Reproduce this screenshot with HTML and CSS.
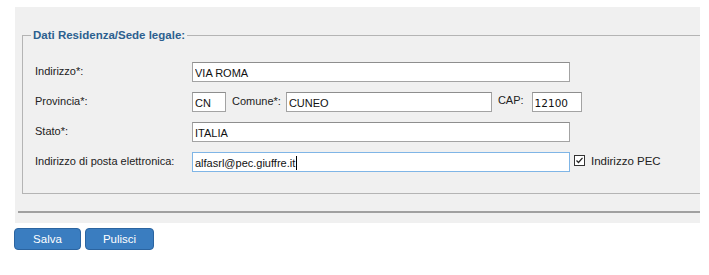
FILE: index.html
```html
<!DOCTYPE html>
<html lang="it">
<head>
  <meta charset="UTF-8">
  <title>Dati Residenza</title>
  <link rel="stylesheet" href="styles.css">
</head>
<body>

  <div class="panel">
    <fieldset class="box">
      <legend>Dati Residenza/Sede legale:</legend>

      <div class="row">
        <label class="lbl">Indirizzo*:</label>
        <input type="text" class="fld long" value="VIA ROMA">
      </div>

      <div class="row">
        <label class="lbl">Provincia*:</label>
        <input type="text" class="fld prov" value="CN">
        <span class="inline-lbl">Comune*:</span>
        <input type="text" class="fld comune" value="CUNEO">
        <span class="inline-lbl cap-lbl">CAP:</span>
        <input type="text" class="fld cap" value="12100">
      </div>

      <div class="row">
        <label class="lbl">Stato*:</label>
        <input type="text" class="fld long" value="ITALIA">
      </div>

      <div class="row">
        <label class="lbl">Indirizzo di posta elettronica:</label>
        <div class="fld long focus">alfasrl@pec.giuffre.it<span class="caret"></span></div>
        <span class="check">
          <svg width="11" height="11" viewBox="0 0 11 11">
            <rect x="0.5" y="0.5" width="10" height="10" fill="#fff" stroke="#333"/>
            <path d="M2.5 5.5 L4.5 7.5 L8.5 2.8" fill="none" stroke="#222" stroke-width="1.2"/>
          </svg>
          Indirizzo PEC
        </span>
      </div>
    </fieldset>

    <div class="sep"></div>
  </div>

  <div class="actions">
    <button class="btn salva">Salva</button>
    <button class="btn pulisci">Pulisci</button>
  </div>

</body>
</html>
```

FILE: styles.css
```css
body {
  margin: 0;
  background: #fff;
  font-family: 'Liberation Sans', Arial, sans-serif;
  font-size: 11px;
  color: #222;
}
.panel {
  margin: 7px 0 0 15px;
  width: 685px;
  height: 216px;
  background: #f0f0f0;
  overflow: hidden;
  padding-top: 21px;
  box-sizing: border-box;
}
.box {
  margin: 0 0 0 7px;
  width: 700px;
  border: 1px solid #b4b4b4;
  border-right: none;
  padding: 20px 0 21px 12px;
  display: flex;
  flex-direction: column;
  gap: 10px;
}
.box legend {
  margin-left: -4px;
  padding: 0 2px;
  color: #2c5f8f;
  font-weight: bold;
  font-size: 11.5px;
  line-height: 14px;
}
.row {
  display: flex;
  align-items: center;
  height: 20px;
}
.lbl {
  width: 157px;
  flex: none;
  padding-bottom: 3px;
}
.fld {
  height: 20px;
  box-sizing: border-box;
  border: 1px solid #a3a3a3;
  border-top-color: #8e8e8e;
  background: #fff;
  font-family: 'Liberation Sans', Arial, sans-serif;
  font-size: 11px;
  color: #111;
  padding: 2px 2px 0;
  margin: 0;
  outline: none;
}
.long {
  width: 378px;
}
.prov {
  width: 34px;
}
.comune {
  width: 206px;
}
.cap {
  width: 50px;
  font-family: 'DejaVu Sans', Verdana, sans-serif;
  font-size: 10.5px;
}
.inline-lbl {
  margin: 0 5px 0 6px;
  padding-bottom: 3px;
}
.cap-lbl {
  margin-right: 8px;
  padding-bottom: 5px;
}
.focus {
  border-color: #7fb5e6;
  display: flex;
  align-items: center;
  padding-top: 1px;
}
.caret {
  display: inline-block;
  width: 1px;
  height: 14px;
  background: #000;
  margin-left: 1px;
}
.check {
  display: flex;
  align-items: center;
  gap: 6px;
  margin-left: 4px;
  font-size: 11.5px;
  padding-bottom: 3px;
}
.sep {
  margin: 17px 0 0 3px;
  height: 2px;
  background: #a0a0a0;
}
.actions {
  display: flex;
  gap: 4px;
  margin: 5px 0 0 14px;
}
.btn {
  height: 22px;
  border: 1px solid #2b64a0;
  border-radius: 4px;
  background: #3a7dc0;
  color: #fff;
  font-family: 'Liberation Sans', Arial, sans-serif;
  font-size: 11.5px;
  padding: 0;
  cursor: pointer;
}
.salva {
  width: 67px;
}
.pulisci {
  width: 69px;
}
```
